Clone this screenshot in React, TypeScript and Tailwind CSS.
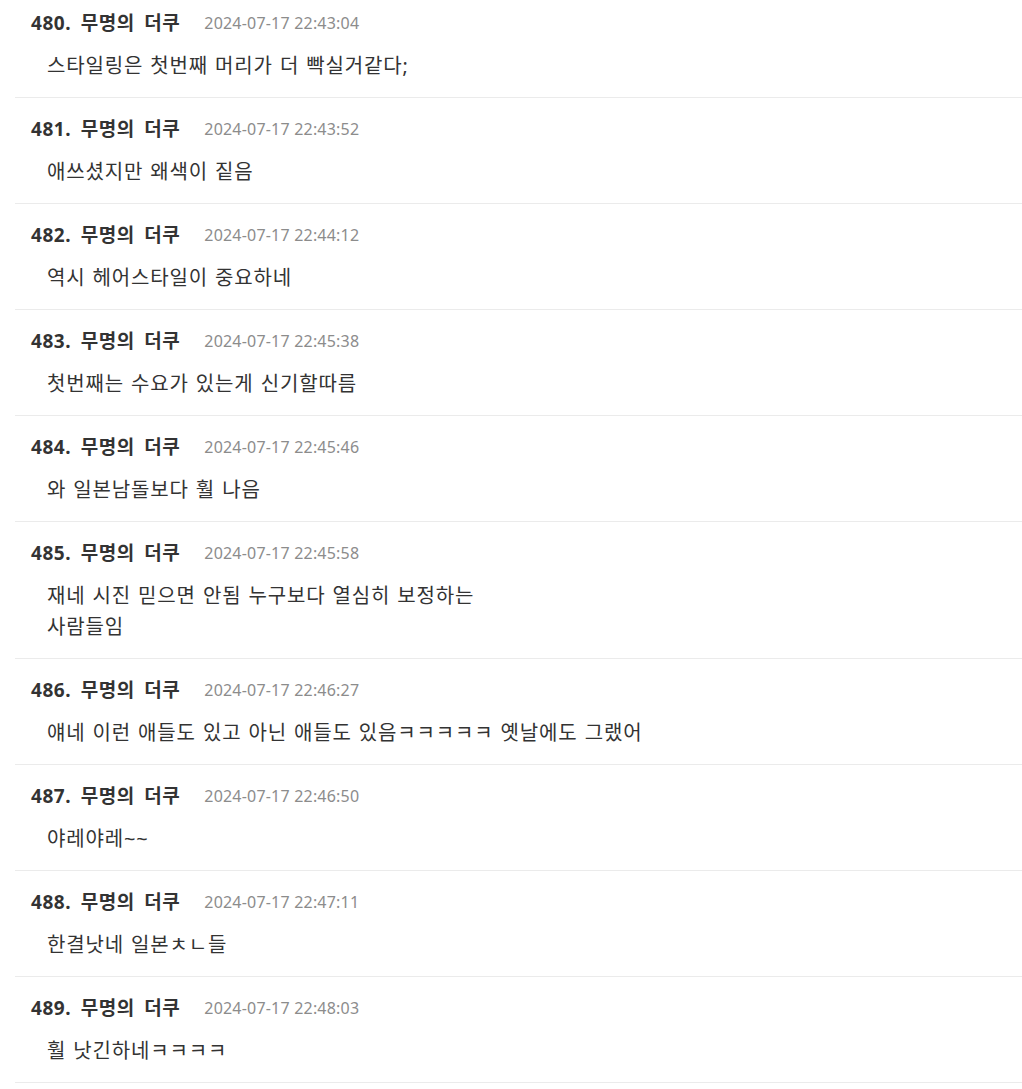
type Comment = {
  no: number;
  time: string;
  body: string[];
};

const comments: Comment[] = [
  { no: 480, time: "2024-07-17 22:43:04", body: ["스타일링은 첫번째 머리가 더 빡실거같다;"] },
  { no: 481, time: "2024-07-17 22:43:52", body: ["애쓰셨지만 왜색이 짙음"] },
  { no: 482, time: "2024-07-17 22:44:12", body: ["역시 헤어스타일이 중요하네"] },
  { no: 483, time: "2024-07-17 22:45:38", body: ["첫번째는 수요가 있는게 신기할따름"] },
  { no: 484, time: "2024-07-17 22:45:46", body: ["와 일본남돌보다 훨 나음"] },
  {
    no: 485,
    time: "2024-07-17 22:45:58",
    body: ["재네 시진 믿으면 안됨 누구보다 열심히 보정하는", "사람들임"],
  },
  { no: 486, time: "2024-07-17 22:46:27", body: ["얘네 이런 애들도 있고 아닌 애들도 있음ㅋㅋㅋㅋㅋ 옛날에도 그랬어"] },
  { no: 487, time: "2024-07-17 22:46:50", body: ["야레야레~~"] },
  { no: 488, time: "2024-07-17 22:47:11", body: ["한결낫네 일본ㅊㄴ들"] },
  { no: 489, time: "2024-07-17 22:48:03", body: ["훨 낫긴하네ㅋㅋㅋㅋ"] },
];

const CommentItem = ({ comment }: { comment: Comment }) => (
  <li className="border-b border-[#ebebeb] pt-[19px] pb-[16px]">
    <div className="flex h-[24px] items-center pl-4">
      <span className="text-[19px] leading-[24px] font-bold tracking-[0.55px] [word-spacing:4px] text-[#333]">
        {comment.no}. 무명의 더쿠
      </span>
      <span className="ml-[24px] text-[16px] leading-[24px] tracking-[0.2px] text-[#8c8c8c]">
        {comment.time}
      </span>
    </div>
    <div className="mt-[15px] pl-8 text-[20px] leading-[31px] tracking-[0.85px] [word-spacing:1px] text-[#333]">
      {comment.body.map((line) => (
        <p key={line}>{line}</p>
      ))}
    </div>
  </li>
);

export default function App() {
  return (
    <div
      className="min-h-screen overflow-hidden bg-white"
      style={{ fontFamily: '"Noto Sans", "Noto Sans CJK KR", sans-serif' }}
    >
      <ul className="ml-[15px] -mt-[8px]">
        {comments.map((c) => (
          <CommentItem key={c.no} comment={c} />
        ))}
      </ul>
    </div>
  );
}
